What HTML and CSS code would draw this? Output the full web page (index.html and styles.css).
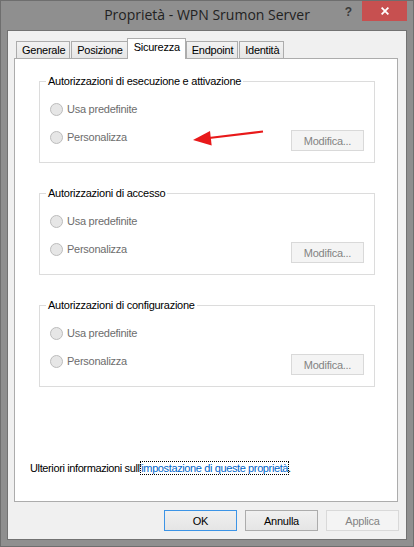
FILE: index.html
```html
<!DOCTYPE html>
<html lang="it">
<head>
<meta charset="utf-8">
<title>Proprietà - WPN Srumon Server</title>
<link rel="stylesheet" href="styles.css">
</head>
<body>
<div class="window">
  <div class="titlebar">
    <div class="title">Proprietà - WPN Srumon Server</div>
    <div class="controls">
      <span class="help">?</span>
      <span class="close"><svg width="8" height="8" viewBox="0 0 8 8"><path d="M0.6 0.6 L7.4 7.4 M7.4 0.6 L0.6 7.4" stroke="#fff" stroke-width="1.8" fill="none"/></svg></span>
    </div>
  </div>
  <div class="client">
    <div class="tabs">
      <span class="tab">Generale</span>
      <span class="tab">Posizione</span>
      <span class="tab active">Sicurezza</span>
      <span class="tab">Endpoint</span>
      <span class="tab">Identità</span>
    </div>
    <div class="panel">
      <fieldset class="group">
        <legend>Autorizzazioni di esecuzione e attivazione</legend>
        <div class="opts">
          <div class="row"><label class="radio"><span class="dot"></span>Usa predefinite</label></div>
          <div class="row"><label class="radio"><span class="dot"></span>Personalizza</label><span class="btn disabled">Modifica...</span></div>
        </div>
      </fieldset>
      <fieldset class="group">
        <legend>Autorizzazioni di accesso</legend>
        <div class="opts">
          <div class="row"><label class="radio"><span class="dot"></span>Usa predefinite</label></div>
          <div class="row"><label class="radio"><span class="dot"></span>Personalizza</label><span class="btn disabled">Modifica...</span></div>
        </div>
      </fieldset>
      <fieldset class="group">
        <legend>Autorizzazioni di configurazione</legend>
        <div class="opts">
          <div class="row"><label class="radio"><span class="dot"></span>Usa predefinite</label></div>
          <div class="row"><label class="radio"><span class="dot"></span>Personalizza</label><span class="btn disabled">Modifica...</span></div>
        </div>
      </fieldset>
      <p class="info">Ulteriori informazioni sull'<a class="link" href="#">impostazione di queste proprietà</a>.</p>
    </div>
    <div class="buttons">
      <span class="btn default">OK</span>
      <span class="btn">Annulla</span>
      <span class="btn disabled">Applica</span>
    </div>
  </div>
</div>
<svg class="arrow" width="414" height="547" viewBox="0 0 414 547">
  <line x1="209" y1="138" x2="263" y2="131.5" stroke="#e8191a" stroke-width="2.2"/>
  <polygon points="193,140 211.7,145.5 210,131" fill="#e8191a"/>
</svg>
</body>
</html>
```
FILE: styles.css
```css
* { box-sizing: border-box; }
html, body { margin: 0; padding: 0; }
body {
  position: relative;
  width: 414px;
  height: 547px;
  overflow: hidden;
  font-family: "Liberation Sans", Arial, sans-serif;
  font-size: 11px;
  letter-spacing: -0.25px;
  color: #000;
}
.window {
  width: 414px;
  height: 547px;
  border: 1px solid #6e6e6e;
  background: #8f8f8f;
  padding: 0 6px 6px;
  display: flex;
  flex-direction: column;
}
.titlebar {
  height: 29px;
  flex: none;
  display: grid;
  grid-template-columns: 1fr auto 1fr;
}
.title {
  grid-column: 2;
  font-family: "Open Sans", "Noto Sans", sans-serif;
  font-size: 14px;
  letter-spacing: 0;
  line-height: 28px;
  color: #222;
  white-space: nowrap;
}
.controls {
  grid-column: 3;
  justify-self: end;
  display: flex;
  align-items: flex-start;
}
.help {
  font-weight: bold;
  font-size: 12px;
  line-height: 23px;
  color: #3a3a3a;
  margin-right: 10px;
  letter-spacing: 0;
}
.close {
  width: 45px;
  height: 20px;
  background: #c75050;
  display: flex;
  align-items: center;
  justify-content: center;
}
.close svg { display: block; }
.client {
  flex: 1;
  background: #f0f0f0;
  border: 1px solid #727272;
  display: flex;
  flex-direction: column;
  padding-top: 7px;
}
.tabs {
  height: 20px;
  flex: none;
  display: flex;
  align-items: flex-end;
  margin-left: 8px;
  gap: 1px;
}
.tab {
  height: 17px;
  border: 1px solid #acacac;
  border-bottom: none;
  background: linear-gradient(#f2f2f2, #e6e6e6);
  padding: 0 4px 0 5px;
  line-height: 16px;
}
.tab.active {
  height: 21px;
  margin: 0 -1px -1px -2px;
  background: #fff;
  padding: 0 5px 0 6px;
  line-height: 17px;
  position: relative;
  z-index: 1;
}
.panel {
  flex: 1;
  margin: 0 8px 0 6px;
  background: #fff;
  border: 1px solid #acacac;
  display: flex;
  flex-direction: column;
}
.group {
  margin: 16px 22px 0 24px;
  border: 1px solid #dcdcdc;
  padding: 0;
  min-width: 0;
}
.group + .group { margin-top: 24px; }
.group legend {
  margin-left: 6px;
  padding: 0 2px;
  line-height: 13px;
}
.opts {
  padding: 13px 10px 11px 10px;
  display: flex;
  flex-direction: column;
  gap: 12px;
}
.row {
  display: flex;
  justify-content: space-between;
  align-items: flex-start;
}
.radio {
  display: flex;
  align-items: center;
  gap: 4px;
  height: 16px;
  color: #6d6d6d;
}
.dot {
  width: 13px;
  height: 13px;
  border-radius: 50%;
  border: 1px solid #bcbcbc;
  background: #e6e6e6;
}
.btn {
  width: 73px;
  height: 21px;
  border: 1px solid #acacac;
  background: linear-gradient(#f0f0f0, #e5e5e5);
  display: flex;
  align-items: center;
  justify-content: center;
  color: #000;
}
.row .btn { margin-top: 1px; }
.btn.disabled {
  border-color: #d9d9d9;
  background: #f4f4f4;
  color: #838383;
}
.btn.default {
  border-color: #3c94e6;
}
.info {
  margin: auto 0 26px 15px;
  line-height: 14px;
  letter-spacing: -0.38px;
}
.link {
  color: #0066cc;
  text-decoration: none;
  outline: 1px dotted #000;
}
.buttons {
  flex: none;
  display: flex;
  justify-content: flex-end;
  gap: 8px;
  margin: 8px 7px 8px 0;
}
.arrow {
  position: absolute;
  left: 0;
  top: 0;
  pointer-events: none;
}
```
